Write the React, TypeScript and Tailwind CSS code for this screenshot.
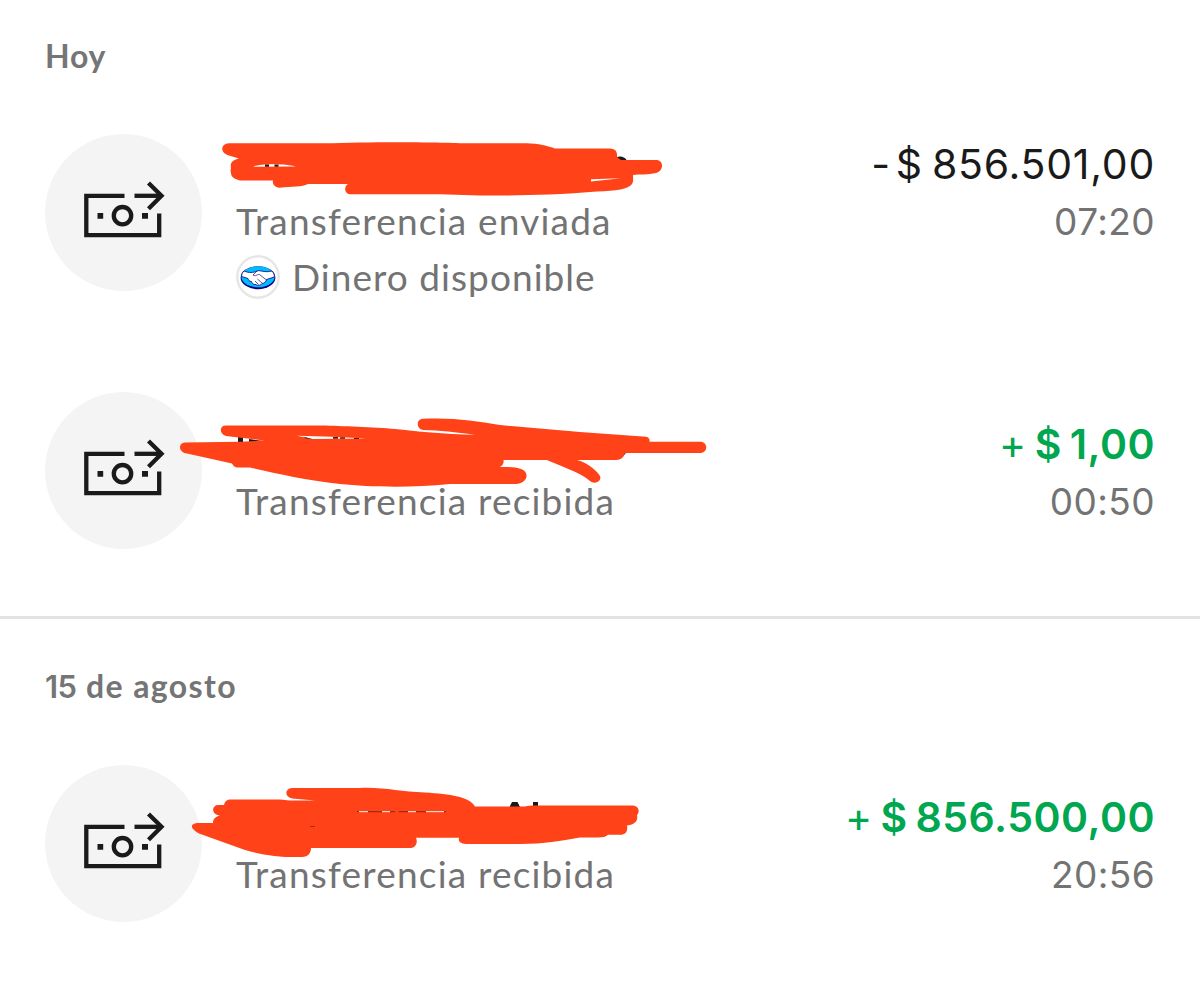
import React from "react";

interface Movement {
    amount: string;
    time: string;
    detail: string;
    sign: string;
    income?: boolean;
    available?: boolean;
    mask: React.ReactNode;
}

const MoneyIcon = () => (
    <div className="flex shrink-0 justify-center items-center w-[157px] h-[157px] pb-[6px] pr-[2px] rounded-full bg-[#f4f4f4]">
        <svg width="84" height="60" viewBox="0 0 84 60" fill="none" stroke="#1a1a1a" strokeWidth="4.3">
            <path d="M43.5 15.800H5.300V55.200H78.200V33.500" />
            <path d="M53.500 15.800H80" />
            <path d="M67.500 3L80.500 15.800L67.500 28.800" />
            <circle cx="41.500" cy="35.700" r="8.700" />
            <path d="M16.500 35.800H22.200M61 35.800H67" strokeWidth="5.7" />
        </svg>
    </div>
);

const WalletLogo = () => (
    <svg className="shrink-0" width="44" height="44" viewBox="0 0 44 44" fill="none">
        <circle cx="22" cy="22" r="20.7" fill="white" stroke="#e6e6e6" strokeWidth="2.4" />
        <ellipse cx="22" cy="22.7" rx="17.4" ry="11.5" fill="#0a0080" />
        <ellipse cx="22" cy="21.8" rx="16.6" ry="10.5" fill="#00bcff" />
        <path d="M8 16C13 18 17 18 21 16C24 14.8 29 18 36 16C38 18.500 38.500 20 38.300 22L30.500 24.500C30 27 28 28.500 26 28.500C24 31 21 30.500 20 29.500C17 30 16 28 15.500 26.500C13 26.500 12.500 25 12 23.500L5.600 21.500C5.600 19 6.500 17.500 8 16Z" fill="white" stroke="#0a0080" strokeWidth="0.8" />
        <path d="M21 16L17 20C19 22 22 19 23.500 19.500L30.500 25M21.500 24L26 28M19 26L22.500 29.500" stroke="#0a0080" strokeWidth="0.7" />
    </svg>
);

interface MaskProps {
    top: number;
    children: React.ReactNode;
}

// marker strokes painted over the name of the contact
const Mask = ({top, children}: MaskProps) => (
    <svg className="absolute left-0 top-0 pointer-events-none" width="1200" height="157" viewBox={`0 ${top} 1200 157`} fill="#ff4217">
        {children}
    </svg>
);

const sentMask = (
    <Mask top={134}>
        <path d="M614 161C615 155 625 155 627 161Z" fill="#1a1a1a" />
        <path d="M229 143.300H325C370 141.500 440 142 465 143.300H525C537 143 548 146 555 148.500H610C616 149 617.500 152 617 157L621 160H656C664 160 664 171 656 173C648 175 640 174 633 175C633 180 634 183 630 186C625 190 610 191 590 192C555 195 510 195.700 480 195.500L440 194.200H350C344 194 344 186 348 184H308C302 187 292 186.500 280 187.700C275 188 272 184 273 180.500H240C233 179 231 176 231 173C230 171 231 169 231 168C230 163 232 160 239 158.500L229 155.500C220 153 220 144 229 143.300Z" />
        <path d="M253 166.700C259 163.600 285 163.200 296 166.600Z" fill="white" />
        <path d="M265 164.500H269V166.700H265ZM274.500 164.500H278.500V166.700H274.500Z" fill="#3a1208" />
        <path d="M591 179.300L621 178.200L591 181.600Z" fill="white" />
    </Mask>
);

const receivedMask = (
    <Mask top={392}>
        <path d="M238 437H243V444H238ZM249 439L263 441L249 443ZM620 453H626L620 459Z" fill="#1a1a1a" />
        <path d="M226 425.500H322C340 426 375 427 395 429C415 431 445 434.500 475 434.800C455 432 440 430.500 423 430C416 429 416 419 423 418.800C455 417.500 475 421 500 425L580 432L646 436.700C649 437.500 650 439 649.500 441.700H701C708 442.500 708 452 701 453H625C624 457 621 460 616 460H577C588 463 597 471 600 476C602 481 595 485 590 481C580 472 560 466 547 460H503.500C504 463 503 465 500 467C515 466.500 526 468 526.500 475C527 480 522 483.700 516 484H450C410 488 370 487 340 484C305 480 275 473 250 467.500H237C234 467 233 465 232 463.500L187 453.500C178 452 178 443 185 442.400L240 441.700L264 440.500L226 436C219 434 219 425.500 226 425.500Z" />
        <path d="M297 435.700L332 436.800L366 438.500L312 439Z" fill="white" />
        <path d="M303 436.500L313 439.200L306 438.500ZM333 437H338V438.700H333ZM340 437.300H345V438.700H340ZM354 438H359V439H354Z" fill="#5a1a0c" />
    </Mask>
);

const augustMask = (
    <Mask top={765}>
        <path d="M509.500 807L512 802H517.500L520 807ZM533 802H538V807H533Z" fill="#1a1a1a" />
        <path d="M292 788H360C385 787 400 792 425 792.500C450 794 470 797 475 806.500H525C530 805 535 805.500 540 805.500H633C639 806 640 812 637 815C638 820 636 824.500 627 825.500C628 831 626 834.800 620 834.800H608C606 837 603 837.500 598 837.500H580C560 841 545 844 520 844H466C460 843.500 458 841 459 837.700H416C418 842 416 847.500 411 848H311C311 853 308 857 302 857C280 857.500 262 855 245 850L199 833.500C189 828 190 823 199 823H213C213 819 215 817 220 815.500C212 815 211 807 217 805H224C225 801 227 799.500 231 799.500H280C291 801 300 800.500 315 800.500L292 798.500C284 797 285 788.500 292 788Z" />
        <path d="M357 811.700H395M399 811.700H446" stroke="#8e2410" strokeWidth="1" />
        <path d="M359 811.700H368M382 811.700H390M408 811.700H416M426 811.700H444" stroke="white" strokeWidth="1" />
        <path d="M310 826.500H315" stroke="#a82c12" strokeWidth="1" />
    </Mask>
);

const MovementRow = ({amount, time, detail, sign, income, available, mask}: Movement) => {
    return (
        <div className="relative flex px-[45px] h-[157px]">
            <MoneyIcon />
            <div className={`flex flex-1 justify-between pl-[34px] ${available ? "pt-[2px]" : "pt-[24px]"}`}>
                <div className="flex flex-col text-[37px] leading-[57px] text-[#737373] whitespace-nowrap">
                    <div className="shrink-0 h-[56px]" />
                    <span className="tracking-[1.2px]">{detail}</span>
                    {available && (
                        <div className="flex items-center gap-[12px] h-[55px]">
                            <WalletLogo />
                            <span className="tracking-[1.05px]">Dinero disponible</span>
                        </div>
                    )}
                </div>
                <div className="flex flex-col items-end font-['Inter',sans-serif] leading-[57px] whitespace-nowrap">
                    <div className={`text-[41px] ${income ? "text-[#00a650]" : "text-[#1a1a1a]"}`}>
                        <span className={income ? "mr-[-3px]" : "mr-[-6px]"}>{sign} </span>
                        <span className={income ? "font-semibold tracking-[0.5px] [word-spacing:-3px]" : "tracking-[0.75px] [word-spacing:-3px]"}>$ {amount}</span>
                    </div>
                    <span className="text-[37px] tracking-[0.4px] text-[#737373]">{time}</span>
                </div>
            </div>
            {mask}
        </div>
    );
}

interface DayTitleProps {
    day?: string;
    children: React.ReactNode;
}

const DayTitle = ({day, children}: DayTitleProps) => (
    <h2 className="px-[45px] text-[32px] leading-[40px] font-bold tracking-[0.8px] text-[#757575]">
        {day && <span className="mr-[2px] font-['Inter',sans-serif] text-[31px] leading-none font-semibold tracking-[-0.5px]">{day} </span>}
        <span className={day ? "tracking-[1.4px]" : ""}>{children}</span>
    </h2>
);

const App = () => {
    return (
        <main className="w-[1200px] h-[987px] overflow-hidden bg-white font-['Lato',sans-serif]">
            <section className="h-[616px] pt-[36px]">
                <DayTitle>Hoy</DayTitle>
                <div className="flex flex-col gap-[101px] pt-[58px]">
                    <MovementRow sign="-" amount="856.501,00" time="07:20" detail="Transferencia enviada" available mask={sentMask} />
                    <MovementRow sign="+" amount="1,00" time="00:50" detail="Transferencia recibida" income mask={receivedMask} />
                </div>
            </section>
            <section className="border-t-[3px] border-[#e3e3e3] pt-[47px]">
                <DayTitle day="15">de agosto</DayTitle>
                <div className="pt-[59px]">
                    <MovementRow sign="+" amount="856.500,00" time="20:56" detail="Transferencia recibida" income mask={augustMask} />
                </div>
            </section>
        </main>
    );
}

export default App;
